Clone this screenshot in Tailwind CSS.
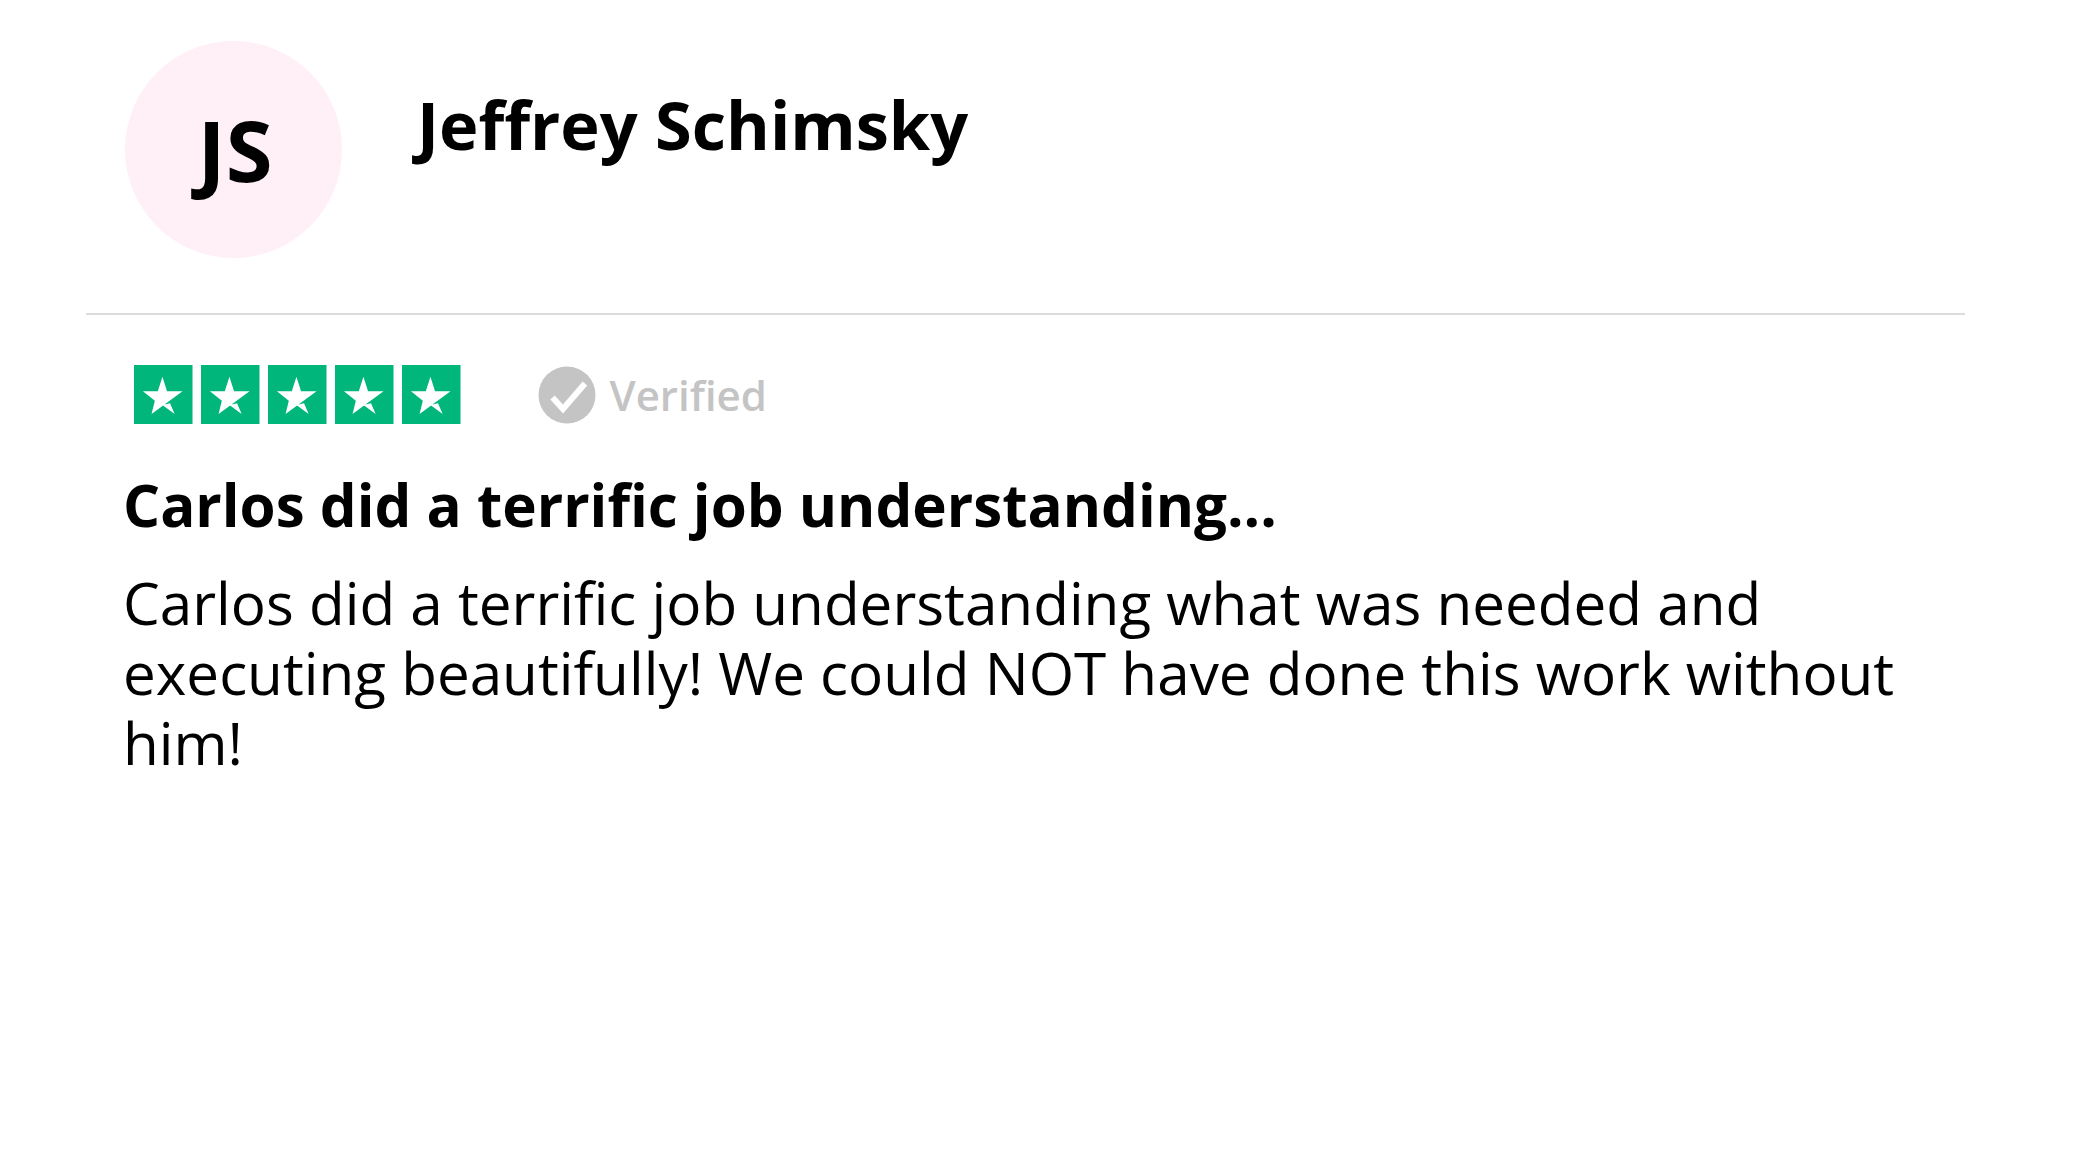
<!DOCTYPE html>
<html lang="en">
<head>
<meta charset="utf-8">
<script src="https://cdn.jsdelivr.net/npm/@tailwindcss/browser@4"></script>
<title>Review</title>
</head>
<body class="bg-white text-black font-['Open_Sans',sans-serif]">
<main class="w-[2084px] h-[1168px] overflow-hidden bg-white">
  <header class="ml-[86px] mr-[119px] pt-[41px] pb-[55px] pl-[39px] border-b-2 border-[#dcdcdc] flex items-start gap-[75px]">
    <div class="w-[217px] h-[217px] rounded-full bg-[#ffeff6] flex items-center justify-center pl-[3px] text-[85px] font-bold leading-none">JS</div>
    <h1 class="text-[66.7px] font-bold leading-[88px] mt-[40px]">Jeffrey Schimsky</h1>
  </header>
  <section class="pl-[123px] pt-[49px]">
    <div class="flex items-center ml-[11px] h-[60px]">
      <div class="flex gap-[8.5px]">
        <svg class="w-[58.5px] h-[59px]" viewBox="0 0 100 100" preserveAspectRatio="none"><rect width="100" height="100" fill="#00b67a"/><path fill="#fff" d="M48.600 19.800 56.500 44.600H83L30 83 35.600 60.500 15.300 44.600H40.700ZM48.600 68 61.600 65 69.500 83Z"/></svg>
        <svg class="w-[58.5px] h-[59px]" viewBox="0 0 100 100" preserveAspectRatio="none"><rect width="100" height="100" fill="#00b67a"/><path fill="#fff" d="M48.600 19.800 56.500 44.600H83L30 83 35.600 60.500 15.300 44.600H40.700ZM48.600 68 61.600 65 69.500 83Z"/></svg>
        <svg class="w-[58.5px] h-[59px]" viewBox="0 0 100 100" preserveAspectRatio="none"><rect width="100" height="100" fill="#00b67a"/><path fill="#fff" d="M48.600 19.800 56.500 44.600H83L30 83 35.600 60.500 15.300 44.600H40.700ZM48.600 68 61.600 65 69.500 83Z"/></svg>
        <svg class="w-[58.5px] h-[59px]" viewBox="0 0 100 100" preserveAspectRatio="none"><rect width="100" height="100" fill="#00b67a"/><path fill="#fff" d="M48.600 19.800 56.500 44.600H83L30 83 35.600 60.500 15.300 44.600H40.700ZM48.600 68 61.600 65 69.500 83Z"/></svg>
        <svg class="w-[58.5px] h-[59px]" viewBox="0 0 100 100" preserveAspectRatio="none"><rect width="100" height="100" fill="#00b67a"/><path fill="#fff" d="M48.600 19.800 56.500 44.600H83L30 83 35.600 60.500 15.300 44.600H40.700ZM48.600 68 61.600 65 69.500 83Z"/></svg>
      </div>
      <svg class="w-[58px] h-[58px] ml-[77px] mt-[1px]" viewBox="0 0 58 58"><circle cx="29" cy="29" r="28.500" fill="#c4c4c4"/><path fill="none" stroke="#fff" stroke-width="6" d="M14.500 31.500 25 43 47 17.500"/></svg>
      <span class="ml-[14px] mt-[2px] text-[42px] font-semibold text-[#c4c4c4] leading-none">Verified</span>
    </div>
    <h2 class="text-[58.3px] font-bold leading-[76px] mt-[43px]">Carlos did a terrific job understanding...</h2>
    <p class="text-[58.4px] leading-[70px] mt-[25px] w-[1810px]">Carlos did a terrific job understanding what was needed and executing beautifully! We could NOT have done this work without him!</p>
  </section>
</main>
</body>
</html>
